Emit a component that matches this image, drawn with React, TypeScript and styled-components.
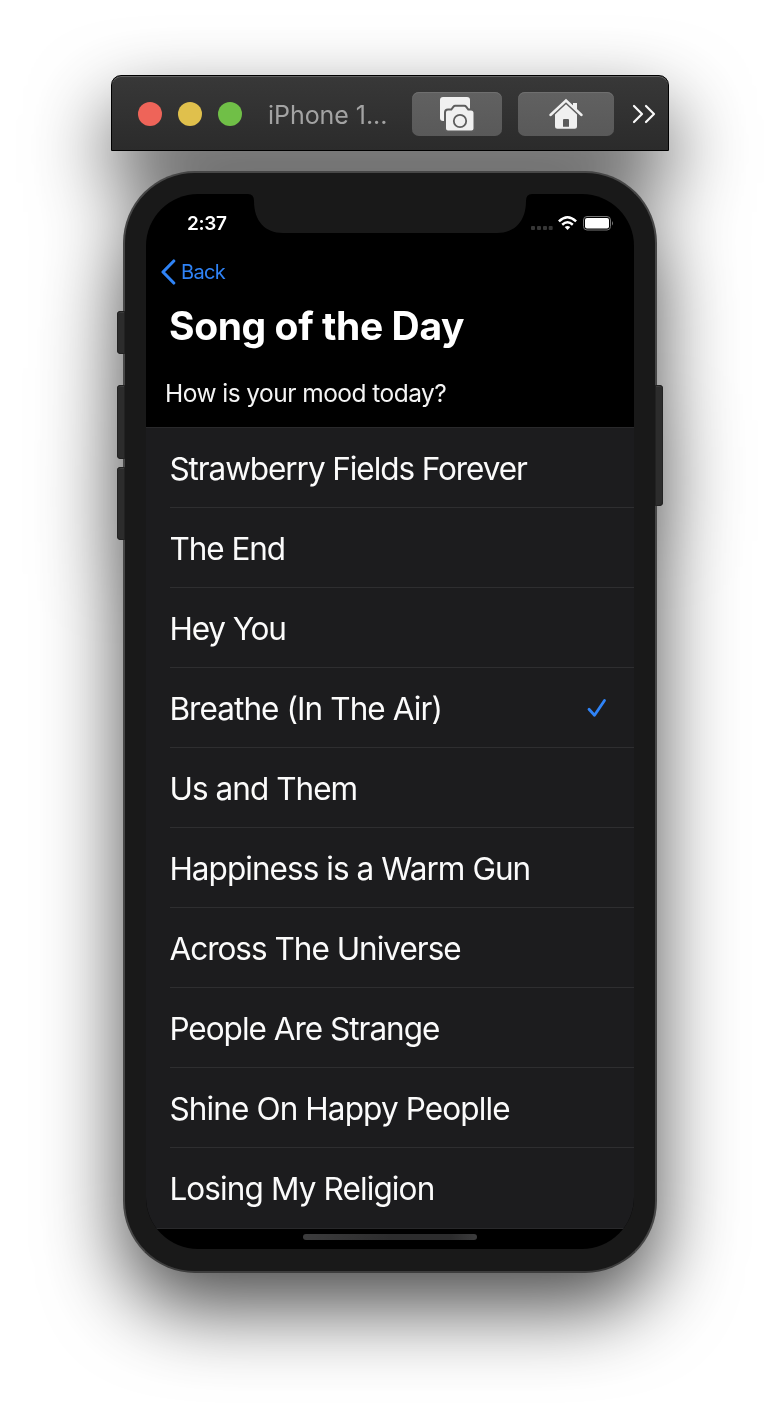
import React from "react";
import styled, { createGlobalStyle } from "styled-components";

const GlobalStyle = createGlobalStyle`
  body { margin: 0; background: #fff; font-family: Inter, "Liberation Sans", sans-serif; }
  * { box-sizing: border-box; }
`;

const Stage = styled.main`
  height: 1422px;
  padding-top: 75px;
  overflow: hidden;
`;

const Simulator = styled.div`
  display: flex;
  flex-direction: column;
  align-items: center;
  gap: 20px;
  filter: drop-shadow(0 35px 40px rgba(0, 0, 0, 0.7));
`;

const TitleBar = styled.header`
  width: 558px;
  height: 76px;
  display: flex;
  align-items: center;
  padding: 2px 12px 0 26px;
  border: 1px solid #000;
  border-radius: 10px 10px 0 0;
  background: linear-gradient(#383838, #2b2b2b);
  box-shadow: inset 0 1px 0 #636363;
`;

const Lights = styled.div`
  display: flex;
  gap: 16px;
`;

const Light = styled.span<{ $color: string }>`
  width: 24px;
  height: 24px;
  border-radius: 50%;
  background: ${(p) => p.$color};
`;

const WindowTitle = styled.span`
  width: 170px;
  padding: 2px 0 0 26px;
  font-size: 25px;
  line-height: 32px;
  letter-spacing: -0.05px;
  color: #a3a3a3;
  white-space: nowrap;
`;

const ToolButton = styled.button<{ $width: number }>`
  width: ${(p) => p.$width}px;
  height: 44px;
  margin-right: 16px;
  padding: 0;
  display: flex;
  align-items: center;
  justify-content: center;
  flex: none;
  border: 0;
  border-radius: 7px;
  background: linear-gradient(#616161, #595959);
  box-shadow: inset 0 1px 0 #6f6f6f;
`;

const MoreGlyph = styled.svg`
  margin-left: 2px;
  flex: none;
`;

const Phone = styled.div`
  position: relative;
  width: 534px;
  height: 1102px;
  padding: 21px;
  border: 2px solid #474747;
  border-bottom-color: #3d3d3d;
  border-radius: 72px;
  background: #191919;
`;

const SideKey = styled.span<{ $side: "left" | "right"; $top: number; $height: number }>`
  position: absolute;
  ${(p) => p.$side}: -8px;
  top: ${(p) => p.$top}px;
  width: 8px;
  height: ${(p) => p.$height}px;
  border-radius: ${(p) => (p.$side === "left" ? "4px 1px 1px 4px" : "1px 4px 4px 1px")};
  background: #2c2c2c;
  box-shadow: inset 0 0 0 1px #222, inset 0 2px 0 #3a3a3a;
`;

const Screen = styled.div`
  width: 488px;
  height: 1055px;
  position: relative;
  border-radius: 52px;
  background: #000;
  overflow: hidden;
`;

const Notch = styled.svg`
  position: absolute;
  top: 0;
  left: 102px;
`;

const StatusBar = styled.div`
  height: 58px;
  padding: 0 20px 0 41px;
  display: flex;
  align-items: center;
  justify-content: space-between;
`;

const StatusGlyphs = styled.svg`
  margin-top: 2px;
`;

const Clock = styled.span`
  font-size: 19px;
  font-weight: 600;
  letter-spacing: -0.3px;
  color: #fff;
`;

const Nav = styled.nav`
  height: 40px;
  padding-left: 15px;
  display: flex;
  align-items: center;
  gap: 5px;
  color: #2f83f6;
  font-size: 20px;
  letter-spacing: -0.7px;
`;

const Heading = styled.h1`
  margin: 0;
  padding: 9px 0 0 23px;
  height: 71px;
  font-size: 39px;
  line-height: 50px;
  font-weight: 700;
  letter-spacing: -0.4px;
  color: #fff;
`;

const Prompt = styled.p`
  margin: 0;
  height: 64px;
  padding: 14px 0 0 19px;
  font-size: 24.5px;
  line-height: 32px;
  letter-spacing: -0.54px;
  color: #f4f4f4;
`;

const List = styled.ul`
  margin: 0;
  padding: 0;
  list-style: none;
  height: 802px;
  border-top: 1px solid #29292b;
  border-bottom: 1px solid #29292b;
  background: #1c1c1e;
`;

const Row = styled.li`
  height: 80px;
  margin-left: 24px;
  padding-right: 27px;
  display: flex;
  align-items: center;
  justify-content: space-between;
  border-bottom: 1px solid #2e2e30;
  &:last-child { border-bottom-color: transparent; }
`;

const Song = styled.span<{ $tracking: number }>`
  margin-left: -0.6px;
  padding-top: 2px;
  font-size: 31.5px;
  line-height: 40px;
  letter-spacing: ${(p) => p.$tracking}px;
  white-space: nowrap;
  color: #fbfbfb;
`;

const HomeBar = styled.div`
  width: 174px;
  height: 6px;
  margin: 5px auto 0;
  border-radius: 3px;
  background: linear-gradient(90deg, #3c3c3d, #2c2c2d 50%, #2c2c2d 85%, #3c3c3d);
`;

const songs: { title: string; tracking: number; checked?: boolean }[] = [
  { title: "Strawberry Fields Forever", tracking: -1.08 },
  { title: "The End", tracking: -1.05 },
  { title: "Hey You", tracking: -1.12 },
  { title: "Breathe (In The Air)", tracking: -0.92, checked: true },
  { title: "Us and Them", tracking: -0.95 },
  { title: "Happiness is a Warm Gun", tracking: -0.95 },
  { title: "Across The Universe", tracking: -1 },
  { title: "People Are Strange", tracking: -1 },
  { title: "Shine On Happy Peoplle", tracking: -0.88 },
  { title: "Losing My Religion", tracking: -0.88 },
];

const CameraIcon = () => (
  <svg width="36" height="36" viewBox="0 0 36 36">
    <path d="M4 1h24q3 0 3 3v21H4q-3 0-3-3V4q0-3 3-3z" fill="#f0f0f0" />
    <path
      d="M9 13.500h3.300l2-2.700q.8-1 2-1h9q1.200 0 2 1l2 2.700h2.700q3.500 0 3.500 3.500v15.500q0 3-3 3H9q-3 0-3-3V16.500q0-3 3-3z"
      fill="#f0f0f0"
      stroke="#5d5d5d"
      strokeWidth="2"
    />
    <circle cx="21" cy="25" r="6.200" fill="none" stroke="#5d5d5d" strokeWidth="1.800" />
  </svg>
);

const HomeIcon = () => (
  <svg width="34" height="32" viewBox="0 0 34 32">
    <path d="M24 5h4v8l-4-3.700z" fill="#f0f0f0" />
    <path d="M1.500 17L17 2.500 32.500 17" fill="none" stroke="#f0f0f0" strokeWidth="2.400" strokeLinecap="round" />
    <path
      d="M17 6.300L28 16.500v11.700q0 2.500-2.500 2.500h-17Q6 30.700 6 28.200V16.500zM14 22v6.700h6V22q0-1-1-1h-4q-1 0-1 1z"
      fill="#f0f0f0"
      fillRule="evenodd"
    />
  </svg>
);

const MoreIcon = () => (
  <MoreGlyph width="24" height="20" viewBox="0 0 24 20" fill="none" stroke="#fafafa" strokeWidth="2.200" strokeLinecap="round" strokeLinejoin="round">
    <path d="M2 2l8 8-8 8M14 2l8 8-8 8" />
  </MoreGlyph>
);

const StatusIcons = () => (
  <StatusGlyphs width="84" height="18" viewBox="0 0 84 18">
    <g fill="#363636">
      <rect x="1" y="11" width="4" height="4" rx="1" />
      <rect x="7" y="11" width="4" height="4" rx="1" />
      <rect x="13" y="11" width="4" height="4" rx="1" />
      <rect x="18.700" y="11" width="4" height="4" rx="1" />
    </g>
    <g fill="none" stroke="#fff" strokeWidth="2.500">
      <path d="M28.900 6.300Q37.500-1.900 46.100 6.300" />
      <path d="M32.200 9.700Q37.500 4.900 42.800 9.700" />
    </g>
    <path d="M34.700 11.900Q37.500 9.900 40.300 11.900L37.500 14.900z" fill="#fff" />
    <rect x="53.500" y="1.500" width="27" height="13.500" rx="3.500" fill="none" stroke="#767676" strokeWidth="1" />
    <rect x="55" y="3" width="24" height="10.500" rx="2" fill="#fff" />
    <path d="M82 6q2 2.300 0 4.500z" fill="#777" />
  </StatusGlyphs>
);

const BackIcon = () => (
  <svg width="15" height="26" viewBox="0 0 15 26" fill="none" stroke="currentColor" strokeWidth="3.100" strokeLinecap="round" strokeLinejoin="round">
    <path d="M12.800 2L2 13l10.800 11" />
  </svg>
);

const CheckIcon = () => (
  <svg width="20" height="20" viewBox="0 0 20 20" fill="none" stroke="#2f83f6" strokeWidth="2.800" strokeLinecap="round" strokeLinejoin="round">
    <path d="M2 11.300l5.500 6L17.500 2.500" />
  </svg>
);

export default function App() {
  return (
    <>
      <GlobalStyle />
      <Stage>
        <Simulator>
          <TitleBar>
            <Lights>
              <Light $color="#ee6459" />
              <Light $color="#e0c04c" />
              <Light $color="#70bf47" />
            </Lights>
            <WindowTitle>iPhone 1...</WindowTitle>
            <ToolButton $width={90} aria-label="Screenshot">
              <CameraIcon />
            </ToolButton>
            <ToolButton $width={96} aria-label="Home">
              <HomeIcon />
            </ToolButton>
            <MoreIcon />
          </TitleBar>
          <Phone>
            <SideKey $side="left" $top={138} $height={43} />
            <SideKey $side="left" $top={212} $height={74} />
            <SideKey $side="left" $top={294} $height={73} />
            <SideKey $side="right" $top={212} $height={121} />
            <Screen>
              <Notch width="284" height="39" viewBox="0 0 284 39">
                <path d="M0 0Q6 0 6 7C6 27 17 39 35 39H249C267 39 278 27 278 7Q278 0 284 0z" fill="#191919" />
              </Notch>
              <StatusBar>
                <Clock>2:37</Clock>
                <StatusIcons />
              </StatusBar>
              <Nav>
                <BackIcon />
                <span>Back</span>
              </Nav>
              <Heading>Song of the Day</Heading>
              <Prompt>How is your mood today?</Prompt>
              <List>
                {songs.map((s) => (
                  <Row key={s.title}>
                    <Song $tracking={s.tracking}>{s.title}</Song>
                    {s.checked && <CheckIcon />}
                  </Row>
                ))}
              </List>
              <HomeBar />
            </Screen>
          </Phone>
        </Simulator>
      </Stage>
    </>
  );
}
